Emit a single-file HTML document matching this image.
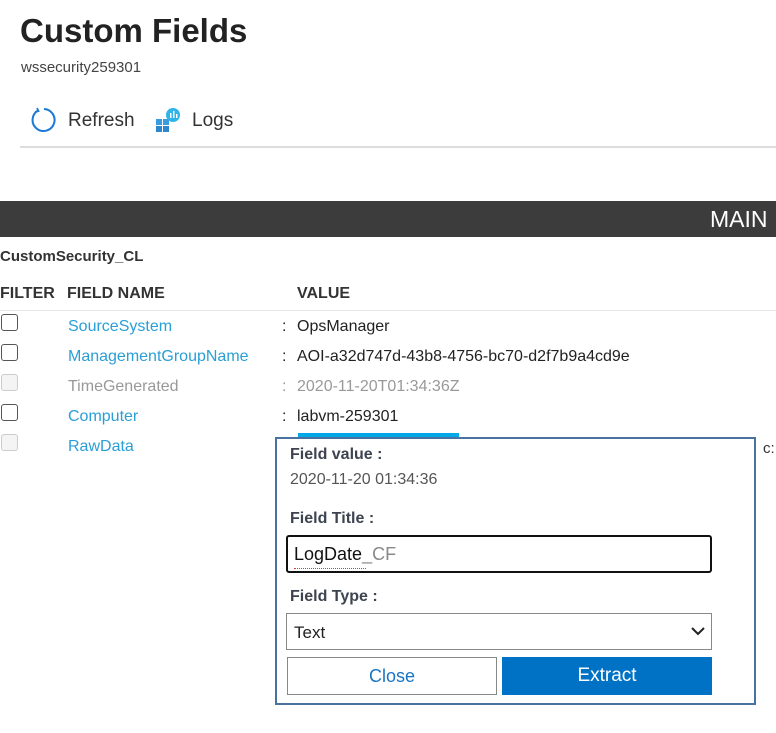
<!DOCTYPE html>
<html><head><style>
body{margin:0;width:776px;height:733px;overflow:hidden;background:#fff;font-family:"Segoe UI","Liberation Sans",sans-serif;color:#323130;position:relative}
.a{position:absolute;white-space:nowrap}
.cb{position:absolute;left:1px;width:17px;height:17px;border:1px solid #555;border-radius:3px;box-sizing:border-box;background:#fff}
.cb.d{border-color:#ccc;background:#f4f4f4}
.fn{position:absolute;left:68px;color:#2a9fd6;font-size:16px}
.col{position:absolute;left:282px;font-size:16px;color:#222}
.val{position:absolute;left:297px;font-size:16px;color:#222}
</style></head><body>
<div class="a" style="left:20px;top:12px;font-size:33px;font-weight:600;color:#222">Custom Fields</div>
<div class="a" style="left:21px;top:59px;font-size:15px;color:#444">wssecurity259301</div>
<svg class="a" style="left:31px;top:107px" width="26" height="26" viewBox="0 0 26 26"><path d="M7 3.5 A11 11 0 1 0 13 2" fill="none" stroke="#1a7ad4" stroke-width="2"/><path d="M6 1 L7.5 4 L4 5" fill="none" stroke="#1a7ad4" stroke-width="1.8"/></svg>
<div class="a" style="left:68px;top:110px;font-size:19px;color:#333">Refresh</div>
<svg class="a" style="left:156px;top:108px" width="24" height="24" viewBox="0 0 24 24"><rect x="0" y="11" width="6" height="6" fill="#3a9ce0"/><rect x="7" y="11" width="6" height="6" fill="#3a9ce0"/><rect x="0" y="18" width="6" height="6" fill="#2e88d0"/><rect x="7" y="18" width="6" height="6" fill="#2e88d0"/><circle cx="17" cy="7" r="7" fill="#2fb3e8"/><rect x="14" y="5" width="1.5" height="5" fill="#fff"/><rect x="17" y="3" width="1.5" height="7" fill="#fff"/><rect x="20" y="6" width="1.5" height="4" fill="#fff"/></svg>
<div class="a" style="left:192px;top:110px;font-size:19px;color:#333">Logs</div>
<div class="a" style="left:20px;top:146px;width:756px;height:2px;background:#ddd"></div>
<div class="a" style="left:0;top:201px;width:776px;height:36px;background:#3c3c3c"></div>
<div class="a" style="left:710px;top:206px;font-size:23px;color:#fff">MAIN</div>
<div class="a" style="left:0;top:248px;font-size:15px;font-weight:700;color:#333">CustomSecurity_CL</div>
<div class="a" style="left:0;top:285px;font-size:16px;font-weight:600;color:#333">FILTER</div>
<div class="a" style="left:67px;top:285px;font-size:16px;font-weight:600;color:#333">FIELD NAME</div>
<div class="a" style="left:297px;top:285px;font-size:16px;font-weight:600;color:#333">VALUE</div>
<div class="a" style="left:0;top:310px;width:776px;height:1px;background:#e8e8e8"></div>

<div class="cb" style="top:314px"></div><div class="fn a" style="top:318px">SourceSystem</div><div class="col a" style="top:318px">:</div><div class="val a" style="top:318px">OpsManager</div>
<div class="cb" style="top:344px"></div><div class="fn a" style="top:348px">ManagementGroupName</div><div class="col a" style="top:348px">:</div><div class="val a" style="top:348px">AOI-a32d747d-43b8-4756-bc70-d2f7b9a4cd9e</div>
<div class="cb d" style="top:374px"></div><div class="fn a" style="top:378px;color:#999">TimeGenerated</div><div class="col a" style="top:378px;color:#999">:</div><div class="val a" style="top:378px;color:#999">2020-11-20T01:34:36Z</div>
<div class="cb" style="top:404px"></div><div class="fn a" style="top:408px">Computer</div><div class="col a" style="top:408px">:</div><div class="val a" style="top:408px">labvm-259301</div>
<div class="cb d" style="top:434px"></div><div class="fn a" style="top:438px">RawData</div>
<div class="a" style="left:298px;top:433px;width:161px;height:4px;background:#00a8e8"></div>
<div class="a" style="left:763px;top:440px;font-size:15px;color:#333">c:</div>

<div class="a" style="left:275px;top:437px;width:481px;height:268px;border:2px solid #4a72a0;box-sizing:border-box;background:#fff">
<div class="a" style="left:13px;top:7px;font-size:16px;font-weight:700;color:#3d4450">Field value :</div>
<div class="a" style="left:13px;top:32px;font-size:16px;color:#555">2020-11-20 01:34:36</div>
<div class="a" style="left:13px;top:71px;font-size:16px;font-weight:700;color:#3d4450">Field Title :</div>
<div class="a" style="left:9px;top:96px;width:426px;height:38px;border:2px solid #111;border-radius:3px;box-sizing:border-box"></div>
<div class="a" style="left:17px;top:105px;font-size:18px;color:#111">LogDate<span style="color:#888">_CF</span></div>
<div class="a" style="left:17px;top:127px;width:72px;height:2px;border-bottom:1px dotted #e33"></div>
<div class="a" style="left:13px;top:149px;font-size:16px;font-weight:700;color:#3d4450">Field Type :</div>
<div class="a" style="left:9px;top:174px;width:426px;height:37px;border:1px solid #888;box-sizing:border-box"></div>
<div class="a" style="left:17px;top:184px;font-size:17px;color:#222">Text</div>
<svg class="a" style="left:414px;top:188px" width="14" height="9"><path d="M1 1 L7 7 L13 1" fill="none" stroke="#222" stroke-width="2"/></svg>
<div class="a" style="left:10px;top:218px;width:210px;height:38px;border:1px solid #888;box-sizing:border-box;text-align:center;line-height:36px;font-size:18px;color:#1a74c4">Close</div>
<div class="a" style="left:225px;top:218px;width:210px;height:38px;background:#0072c6;text-align:center;line-height:38px;font-size:19px;color:#fff">Extract</div>
</div>
</body></html>
